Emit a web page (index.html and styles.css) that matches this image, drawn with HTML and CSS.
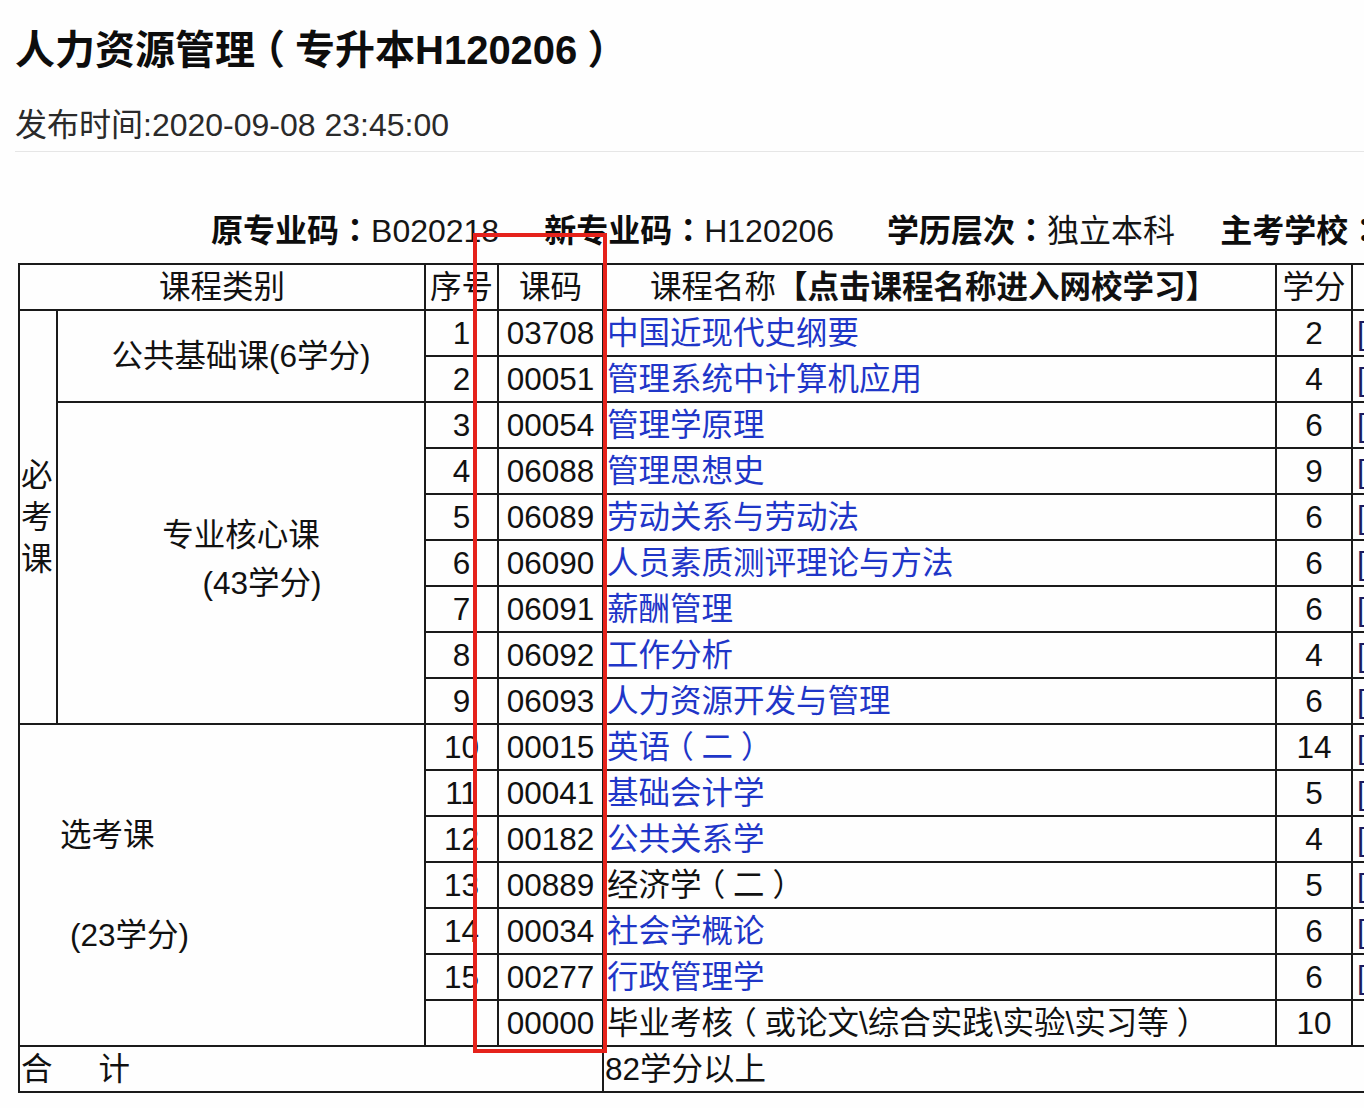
FILE: index.html
```html
<!DOCTYPE html>
<html lang="zh-CN">
<head>
<meta charset="utf-8">
<title>人力资源管理（专升本H120206）</title>
<link rel="stylesheet" href="styles.css">
</head>
<body>
<div class="page">
  <h1 class="title">人力资源管理<span class="pb">（</span>专升本H120206<span class="pb">）</span></h1>
  <div class="date">发布时间:2020-09-08 23:45:00</div>
  <div class="rule"></div>
  <div class="info">
    <span><b>原专业码<span class="p" lang="zh-TW">：</span></b>B020218</span>
    <span><b>新专业码<span class="p" lang="zh-TW">：</span></b>H120206</span>
    <span class="lvl"><b>学历层次<span class="p" lang="zh-TW">：</span></b>独立本科</span>
    <span><b>主考学校<span class="p" lang="zh-TW">：</span></b></span>
  </div>
  <table class="plan">
    <colgroup>
      <col class="c1"><col class="c2"><col class="c3"><col class="c4"><col class="c5"><col class="c6"><col class="c7">
    </colgroup>
    <thead>
      <tr>
        <th colspan="2">课程类别</th>
        <th>序号</th>
        <th>课码</th>
        <th class="hname">课程名称<b>【点击课程名称进入网校学习】</b></th>
        <th>学分</th>
        <th></th>
      </tr>
    </thead>
    <tbody>
      <tr>
        <td rowspan="9" class="vert">必<br>考<br>课</td>
        <td rowspan="2" class="cat">公共基础课(6学分)</td>
        <td class="no">1</td><td class="code">03708</td><td class="name"><a href="#">中国近现代史纲要</a></td><td class="cr">2</td><td class="more">[</td>
      </tr>
      <tr>
        <td class="no">2</td><td class="code">00051</td><td class="name"><a href="#">管理系统中计算机应用</a></td><td class="cr">4</td><td class="more">[</td>
      </tr>
      <tr>
        <td rowspan="7" class="cat core"><span class="l1">专业核心课</span><span class="l2">(43学分)</span></td>
        <td class="no">3</td><td class="code">00054</td><td class="name"><a href="#">管理学原理</a></td><td class="cr">6</td><td class="more">[</td>
      </tr>
      <tr>
        <td class="no">4</td><td class="code">06088</td><td class="name"><a href="#">管理思想史</a></td><td class="cr">9</td><td class="more">[</td>
      </tr>
      <tr>
        <td class="no">5</td><td class="code">06089</td><td class="name"><a href="#">劳动关系与劳动法</a></td><td class="cr">6</td><td class="more">[</td>
      </tr>
      <tr>
        <td class="no">6</td><td class="code">06090</td><td class="name"><a href="#">人员素质测评理论与方法</a></td><td class="cr">6</td><td class="more">[</td>
      </tr>
      <tr>
        <td class="no">7</td><td class="code">06091</td><td class="name"><a href="#">薪酬管理</a></td><td class="cr">6</td><td class="more">[</td>
      </tr>
      <tr>
        <td class="no">8</td><td class="code">06092</td><td class="name"><a href="#">工作分析</a></td><td class="cr">4</td><td class="more">[</td>
      </tr>
      <tr>
        <td class="no">9</td><td class="code">06093</td><td class="name"><a href="#">人力资源开发与管理</a></td><td class="cr">6</td><td class="more">[</td>
      </tr>
      <tr>
        <td rowspan="7" colspan="2" class="opt"><span class="oa">选考课</span><span class="ob">(23学分)</span></td>
        <td class="no">10</td><td class="code">00015</td><td class="name"><a href="#">英语<span class="pb">（</span>二<span class="pb">）</span></a></td><td class="cr">14</td><td class="more">[</td>
      </tr>
      <tr>
        <td class="no">11</td><td class="code">00041</td><td class="name"><a href="#">基础会计学</a></td><td class="cr">5</td><td class="more">[</td>
      </tr>
      <tr>
        <td class="no">12</td><td class="code">00182</td><td class="name"><a href="#">公共关系学</a></td><td class="cr">4</td><td class="more">[</td>
      </tr>
      <tr>
        <td class="no">13</td><td class="code">00889</td><td class="name">经济学<span class="pb">（</span>二<span class="pb">）</span></td><td class="cr">5</td><td class="more">[</td>
      </tr>
      <tr>
        <td class="no">14</td><td class="code">00034</td><td class="name"><a href="#">社会学概论</a></td><td class="cr">6</td><td class="more">[</td>
      </tr>
      <tr>
        <td class="no">15</td><td class="code">00277</td><td class="name"><a href="#">行政管理学</a></td><td class="cr">6</td><td class="more">[</td>
      </tr>
      <tr>
        <td class="no"></td><td class="code">00000</td><td class="name">毕业考核<span class="pb">（</span>或论文\综合实践\实验\实习等<span class="pb">）</span></td><td class="cr">10</td><td class="more"></td>
      </tr>
      <tr>
        <td colspan="4" class="sum">合<span class="gap">计</span></td>
        <td colspan="3" class="total">82学分以上</td>
      </tr>
    </tbody>
  </table>
  <div class="mark"></div>
</div>
</body>
</html>
```

FILE: styles.css
```css
html, body {
  margin: 0;
  padding: 0;
  background: #fefefe;
}

body {
  width: 1364px;
  height: 1108px;
  overflow: hidden;
  font-family: "Liberation Sans", "Noto Sans CJK SC", sans-serif;
  color: #111;
}

.page {
  position: relative;
  padding: 26px 0 0 15px;
}

.p {
  font-family: "Liberation Sans", "Noto Sans CJK TC", sans-serif;
}

/* full-width brackets: half-width glyph centred in a full-width box */
.pb {
  font-feature-settings: "halt" 1;
  padding: 0 0.25em;
}

.title {
  margin: 0;
  font-size: 40px;
  line-height: 48px;
  font-weight: 700;
  white-space: nowrap;
  color: #0d0d0d;
}

.date {
  margin-top: 31px;
  font-size: 32px;
  line-height: 40px;
  color: #2a2a2a;
  white-space: nowrap;
}

.rule {
  margin-top: 6px;
  border-top: 1px solid #e6e6e6;
}

.info {
  display: flex;
  gap: 45px;
  margin-top: 59px;
  margin-left: 196px;
  font-size: 32px;
  line-height: 40px;
  white-space: nowrap;
  color: #151515;
}

.info b {
  font-weight: 700;
  color: #0d0d0d;
}

.info .lvl {
  margin-left: 8px;
}

.plan {
  margin-top: 12px;
  margin-left: 3px;
  border-collapse: collapse;
  table-layout: fixed;
  width: 1533px;
  font-size: 31.5px;
  line-height: 40px;
  color: #111;
}

.c1 { width: 38px; }
.c2 { width: 368px; }
.c3 { width: 73px; }
.c4 { width: 105px; }
.c5 { width: 673px; }
.c6 { width: 76px; }
.c7 { width: 200px; }

.plan tr {
  height: 46px;
}

.plan th,
.plan td {
  border: 2px solid #1a1a1a;
  padding: 0;
  vertical-align: middle;
  white-space: nowrap;
  overflow: hidden;
}

.plan th {
  font-weight: 400;
  text-align: center;
}

.plan th b {
  font-weight: 700;
}

.plan .hname {
  text-align: left;
  padding-left: 46px;
}

.vert {
  text-align: left;
  padding-left: 1px !important;
  line-height: 42px;
  white-space: normal !important;
}

.cat {
  text-align: center;
}

.core {
  padding-bottom: 8px !important;
}

.core .l1,
.core .l2 {
  display: block;
  line-height: 48px;
}

.core .l2 {
  padding-left: 42px;
}

.opt .oa,
.opt .ob {
  display: block;
  line-height: 40px;
}

.opt .oa {
  margin-left: 40px;
}

.opt .ob {
  margin-left: 50px;
  margin-top: 60px;
}

.no,
.code,
.cr {
  text-align: center;
}

.name {
  padding-left: 3px !important;
}

.name a {
  color: #1f36c8;
  text-decoration: none;
}

.more {
  padding-left: 4px !important;
  color: #1b1b5e;
}

.sum {
  padding-left: 1px !important;
}

.sum .gap {
  margin-left: 46px;
}

.total {
  padding-left: 1px !important;
}

.mark {
  position: absolute;
  left: 473px;
  top: 233px;
  width: 134px;
  height: 820px;
  box-sizing: border-box;
  border: 4px solid #e5221b;
  pointer-events: none;
}
```
